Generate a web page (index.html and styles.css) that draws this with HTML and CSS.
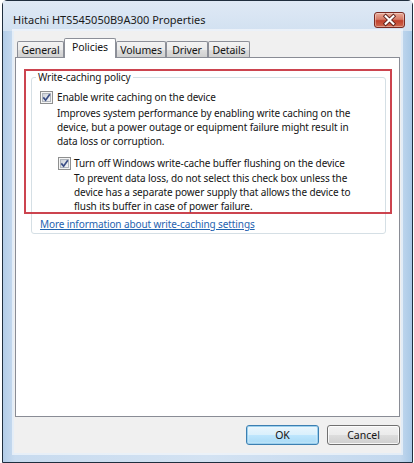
FILE: index.html
```html
<!DOCTYPE html>
<html>
<head>
<meta charset="utf-8">
<title>Hitachi HTS545050B9A300 Properties</title>
<link rel="stylesheet" href="styles.css">
</head>
<body>
<div class="window">
  <div class="titlebar">
    <div class="title">Hitachi HTS545050B9A300 Properties</div>
    <div class="close">
      <svg width="30" height="16" viewBox="0 0 30 16">
        <path d="M11 4 L19 12 M19 4 L11 12" stroke="#5a1f1a" stroke-width="4" stroke-linecap="square"/>
        <path d="M11 4 L19 12 M19 4 L11 12" stroke="#ffffff" stroke-width="2.2" stroke-linecap="square"/>
      </svg>
    </div>
  </div>
  <div class="client">
    <div class="tabs">
      <div class="tab tab-general">General</div>
      <div class="tab tab-selected">Policies</div>
      <div class="tab tab-volumes">Volumes</div>
      <div class="tab tab-driver">Driver</div>
      <div class="tab tab-details">Details</div>
    </div>
    <div class="panel">
      <fieldset class="group">
        <legend>Write-caching policy</legend>
        <div class="check-row row-1">
          <svg class="checkbox" width="13" height="13" viewBox="0 0 13 13">
            <defs>
              <linearGradient id="cbg" x1="0" y1="0" x2="1" y2="1">
                <stop offset="0" stop-color="#cbd0d8"/>
                <stop offset="1" stop-color="#f7f7f8"/>
              </linearGradient>
            </defs>
            <rect x="0.5" y="0.5" width="12" height="12" fill="#f4f4f4" stroke="#8e8f8f"/>
            <rect x="2.5" y="2.5" width="8" height="8" fill="url(#cbg)" stroke="#b0b5bc"/>
            <path d="M3.3 6.4 L5.6 9.2 L9.8 3.2" fill="none" stroke="#3a4d85" stroke-width="1.7"/>
          </svg>
          <span>Enable write caching on the device</span>
        </div>
        <p class="desc desc-1">Improves system performance by enabling write caching on the device, but a power outage or equipment failure might result in data loss or corruption.</p>
        <div class="check-row row-2">
          <svg class="checkbox" width="13" height="13" viewBox="0 0 13 13">
            <rect x="0.5" y="0.5" width="12" height="12" fill="#f4f4f4" stroke="#8e8f8f"/>
            <rect x="2.5" y="2.5" width="8" height="8" fill="url(#cbg)" stroke="#b0b5bc"/>
            <path d="M3.3 6.4 L5.6 9.2 L9.8 3.2" fill="none" stroke="#3a4d85" stroke-width="1.7"/>
          </svg>
          <span>Turn off Windows write-cache buffer flushing on the device</span>
        </div>
        <p class="desc desc-2">To prevent data loss, do not select this check box unless the device has a separate power supply that allows the device to flush its buffer in case of power failure.</p>
        <a class="link" href="#">More information about write-caching settings</a>
      </fieldset>
      <div class="annotation"></div>
    </div>
    <div class="buttons">
      <button class="btn btn-default">OK</button>
      <button class="btn">Cancel</button>
    </div>
  </div>
</div>
</body>
</html>
```
FILE: styles.css
```css
* { box-sizing: border-box; }
html, body { margin: 0; padding: 0; }
body {
  background: #ffffff;
  font-family: "Segoe UI", "Noto Sans", "Open Sans", sans-serif;
  font-size: 10px;
  letter-spacing: -0.1px;
  color: #141414;
  width: 414px;
  height: 463px;
  overflow: hidden;
}
.window {
  margin-left: 2px;
  width: 411px;
  height: 463px;
  border: 1px solid #1f2e3e;
  border-radius: 5px 5px 0 0;
  background: linear-gradient(to right, #b3cde8 0, #c8dbef 12px, #d3e2f2 50%, #c3d8ee calc(100% - 12px), #a8c8e6 100%);
  padding: 0 11px 9px 11px;
  display: flex;
  flex-direction: column;
}
.titlebar {
  height: 30px;
  margin: 0 -11px;
  padding: 11px 7px 0 10px;
  display: flex;
  justify-content: space-between;
  align-items: flex-start;
  background: linear-gradient(to bottom, #dfe9f5, #d2e1f1);
}
.title {
  font-size: 11px;
  letter-spacing: 0;
  line-height: 16px;
  color: #1b1b1b;
}
.close {
  width: 31px;
  height: 16px;
  border: 1px solid #7a2a22;
  border-radius: 3px;
  background: linear-gradient(to bottom, #e9aa98 0, #d67a66 45%, #c0412d 55%, #cf6a50 100%);
  box-shadow: inset 0 0 0 1px rgba(255,255,255,0.35);
  display: flex;
  align-items: center;
  justify-content: center;
}
.close svg { display: block; }
.client {
  flex: 1;
  background: #f0f0f0;
  padding: 7px 1px 0 1px;
  box-shadow: 0 0 0 2px rgba(255,255,255,0.55);
  display: flex;
  flex-direction: column;
}
.tabs {
  display: flex;
  padding-left: 2px;
  height: 19px;
  align-items: flex-end;
  position: relative;
  z-index: 1;
}
.tab {
  height: 16px;
  border: 1px solid #8c8f98;
  border-bottom: none;
  border-radius: 2px 2px 0 0;
  background: linear-gradient(to bottom, #f3f3f3 0, #ebebeb 50%, #dedede 51%, #d0d0d0 100%);
  font-size: 10.5px;
  line-height: 16px;
  text-align: center;
}
.tab-general { width: 47px; }
.tab-volumes { width: 50px; }
.tab-driver { width: 42px; }
.tab-details { width: 42px; }
.tab-selected {
  width: 52px;
  height: 20px;
  margin-bottom: -1px;
  background: #ffffff;
  line-height: 17px;
}
.panel {
  position: relative;
  height: 360px;
  background: #ffffff;
  border: 1px solid #898c95;
}
.group {
  margin: 11px 13px 0 15px;
  padding: 5px 0 2px 0;
  border: 1px solid #d5dfe5;
  border-radius: 3px;
  min-width: 0;
}
.group legend {
  margin-left: 4px;
  padding: 0 2px;
  line-height: 16px;
}
.check-row {
  display: flex;
  align-items: center;
  height: 14px;
  line-height: 14px;
}
.checkbox { display: block; flex: none; }
.row-1 { margin-left: 8px; gap: 4px; }
.row-2 { margin-left: 26px; gap: 3px; margin-top: 8px; }
.desc {
  margin: 2px 0 0 0;
  line-height: 14px;
}
.desc-1 { margin-left: 25px; margin-right: 20px; }
.desc-2 { margin-left: 42px; margin-right: 20px; margin-top: 1px; }
.link {
  display: block;
  margin: 4px 0 0 8px;
  line-height: 14px;
  color: #1f63b0;
  text-decoration: underline;
}
.annotation {
  position: absolute;
  left: 8px;
  top: 11px;
  width: 368px;
  height: 145px;
  border: 2px solid #c7303c;
  opacity: 0.9;
  pointer-events: none;
}
.buttons {
  display: flex;
  justify-content: flex-end;
  gap: 8px;
  margin-top: 8px;
}
.btn {
  width: 73px;
  height: 20px;
  border: 1px solid #707070;
  border-radius: 3px;
  background: linear-gradient(to bottom, #f2f2f2 0, #ebebeb 50%, #dddddd 51%, #cfcfcf 100%);
  box-shadow: inset 0 0 0 1px rgba(255,255,255,0.8);
  font-family: inherit;
  font-size: 10.5px;
  color: #141414;
  padding: 0;
}
.btn-default {
  border-color: #3c7fb1;
  background: linear-gradient(to bottom, #eaf6fd 0, #d9f0fc 50%, #bee6fd 51%, #a7d9f5 100%);
  box-shadow: inset 0 0 0 1px #9cd0ee, inset 0 0 2px 1px rgba(255,255,255,0.7);
}
```
